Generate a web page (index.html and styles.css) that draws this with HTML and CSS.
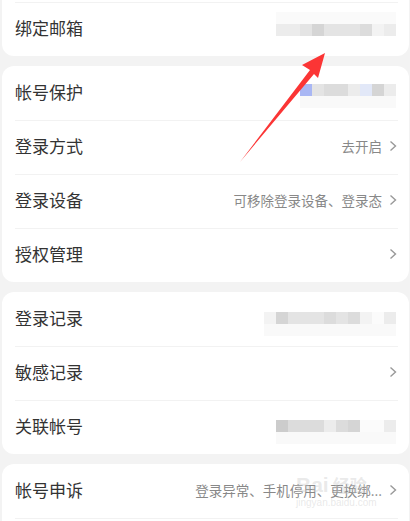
FILE: index.html
```html
<!DOCTYPE html>
<html lang="zh-CN">
<head>
  <meta charset="UTF-8">
  <meta name="viewport" content="width=device-width, initial-scale=1.0">
  <title>帐号与安全</title>
  <link rel="stylesheet" href="styles.css">
</head>
<body>
  <div class="page">
    <!-- Binding -->
    <div class="card">
      <div class="row"></div>
      <div class="row">
        <span class="label">绑定邮箱</span>
        <span class="mosaic mosaic-up">
          <i class="s-e"></i><i class="s-e"></i><i class="s-d"></i><i class="s-b"></i><i class="s-d"></i><i class="s-d"></i><i class="s-d"></i><i class="s-c"></i><i class="s-f"></i><i class="s-e"></i>
        </span>
      </div>
    </div>

    <!-- Protection -->
    <div class="card">
      <div class="row">
        <span class="label">帐号保护</span>
        <span class="mosaic mosaic-down mosaic-high">
          <i class="s-blue"></i><i class="s-d"></i><i class="s-c"></i><i class="s-c"></i><i class="s-e"></i><i class="s-lb"></i><i class="s-b"></i><i class="s-e"></i>
        </span>
      </div>
      <div class="row">
        <span class="label">登录方式</span>
        <span class="value">去开启</span>
        <svg class="chevron" viewBox="0 0 8 12"><path d="M1.5 1.5 L6.5 6 L1.5 10.5"/></svg>
      </div>
      <div class="row">
        <span class="label">登录设备</span>
        <span class="value">可移除登录设备、登录态</span>
        <svg class="chevron" viewBox="0 0 8 12"><path d="M1.5 1.5 L6.5 6 L1.5 10.5"/></svg>
      </div>
      <div class="row">
        <span class="label">授权管理</span>
        <span class="value"></span>
        <svg class="chevron" viewBox="0 0 8 12"><path d="M1.5 1.5 L6.5 6 L1.5 10.5"/></svg>
      </div>
    </div>

    <!-- Records -->
    <div class="card">
      <div class="row">
        <span class="label">登录记录</span>
        <span class="mosaic mosaic-down">
          <i class="s-f"></i><i class="s-b"></i><i class="s-d"></i><i class="s-d"></i><i class="s-d"></i><i class="s-c"></i><i class="s-d"></i><i class="s-c"></i><i class="s-f"></i><i class="s-w"></i><i class="s-e"></i>
        </span>
      </div>
      <div class="row">
        <span class="label">敏感记录</span>
        <span class="value"></span>
        <svg class="chevron" viewBox="0 0 8 12"><path d="M1.5 1.5 L6.5 6 L1.5 10.5"/></svg>
      </div>
      <div class="row">
        <span class="label">关联帐号</span>
        <span class="mosaic mosaic-down">
          <i class="s-a"></i><i class="s-c"></i><i class="s-c"></i><i class="s-c"></i><i class="s-e"></i><i class="s-c"></i><i class="s-b"></i><i class="s-w"></i><i class="s-w"></i><i class="s-e"></i>
        </span>
      </div>
    </div>

    <!-- Appeal -->
    <div class="card">
      <div class="row">
        <span class="label">帐号申诉</span>
        <span class="value">登录异常、手机停用、更换绑...</span>
        <svg class="chevron" viewBox="0 0 8 12"><path d="M1.5 1.5 L6.5 6 L1.5 10.5"/></svg>
      </div>
      <div class="row"></div>
    </div>
  </div>

  <!-- Red annotation arrow -->
  <svg class="arrow" viewBox="0 0 410 521" width="410" height="521">
    <polygon points="325,53 302,65 310,70 240,162 314,74 318,78"/>
  </svg>

  <!-- Watermark -->
  <div class="watermark">
    <div class="wm-brand">Bai<span class="wm-cn">经验</span></div>
    <div class="wm-url">jingyan.baidu.com</div>
  </div>
</body>
</html>
```

FILE: styles.css
```css
body {
  margin: 0;
  background-color: #f3f3f3;
  font-family: "Noto Sans CJK SC", "Noto Sans", sans-serif;
  overflow: hidden;
}

.page {
  display: flex;
  flex-direction: column;
  gap: 10px;
  margin-top: -52px;
  padding: 0 1px 0 2px;
}

.card {
  background-color: #fff;
  border-radius: 12px;
}

.row {
  display: flex;
  align-items: center;
  box-sizing: border-box;
  height: 54px;
  padding: 0 12px 3px 13px;
  position: relative;
}

.row + .row::before {
  content: "";
  position: absolute;
  top: 0;
  left: 13px;
  right: 11px;
  border-top: 1px solid #f2f2f2;
}

.label {
  font-size: 17px;
  color: #333;
  flex-grow: 1;
}

.value {
  font-size: 13.5px;
  color: #888;
}

.chevron {
  width: 8px;
  height: 12px;
  margin-left: 7px;
  fill: none;
  stroke: #999;
  stroke-width: 1.4;
}

/* Blurred (pixelated) personal info */
.mosaic {
  display: flex;
  margin-right: 1px;
  position: relative;
}

.mosaic i {
  display: block;
  width: 12px;
  height: 12px;
}

.mosaic-up {
  top: 2px;
  box-shadow: 0 -12px 0 #fafafa;
}

.mosaic-down {
  top: 0;
  box-shadow: 0 12px 0 #f9f9f9;
}

.mosaic-high {
  top: -2px;
}

.s-a { background-color: #cccccc; }
.s-b { background-color: #d5d5d5; }
.s-c { background-color: #dcdcdc; }
.s-d { background-color: #e4e4e4; }
.s-e { background-color: #ececec; }
.s-f { background-color: #f3f3f3; }
.s-w { background-color: #fbfbfb; }
.s-blue { background-color: #a9b7f4; }
.s-lb { background-color: #e2e8f8; }

.arrow {
  position: absolute;
  left: 0;
  top: 0;
  pointer-events: none;
}

.arrow polygon {
  fill: #fb3535;
}

.watermark {
  position: absolute;
  left: 296px;
  top: 474px;
  color: rgba(200, 200, 200, 0.4);
  pointer-events: none;
}

.wm-brand {
  font-family: "Liberation Sans", sans-serif;
  font-size: 21px;
  font-weight: bold;
  line-height: 22px;
}

.wm-cn {
  font-family: "Noto Sans CJK SC", sans-serif;
  font-size: 17px;
  margin-left: 4px;
}

.wm-url {
  font-family: "Liberation Sans", sans-serif;
  font-size: 10px;
  margin-top: 1px;
}
```
